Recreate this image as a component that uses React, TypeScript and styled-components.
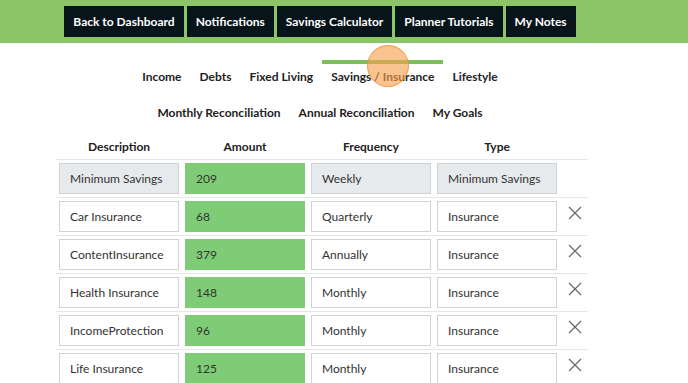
import React from "react";
import styled, { createGlobalStyle } from "styled-components";

const Global = createGlobalStyle`
  html, body { margin: 0; padding: 0; overflow: hidden; background: #fff; }
  body { font-family: Lato, "Noto Sans", sans-serif; color: #222; }
  * { box-sizing: border-box; }
`;

const Page = styled.div`
  width: 688px;
  height: 383px;
  position: relative;
  overflow: hidden;
`;

const TopBar = styled.div`
  height: 43px;
  background: #8cc567;
  padding-top: 6px;
`;

const Inner = styled.div`
  width: 640px;
  display: flex;
  justify-content: center;
`;

const TopButtons = styled.div`
  display: flex;
  gap: 3px;
`;

const TopButton = styled.button`
  height: 31px;
  padding: 0 8px;
  background: #07141a;
  color: #fff;
  border: 1px solid #07141a;
  font-family: Lato, "Noto Sans", sans-serif;
  font-weight: 700;
  font-size: 12px;
  cursor: pointer;
`;

const TabsWrap = styled.div`
  width: 640px;
  margin-top: 17px;
  display: flex;
  flex-direction: column;
  align-items: center;
  gap: 11px;
`;

const TabRow = styled.div`
  display: flex;
`;

const Tab = styled.div<{ $active?: boolean }>`
  border-top: 4px solid ${(p) => (p.$active ? "#7dbd5a" : "transparent")};
  padding: 5px 9px 0;
  line-height: 16px;
  font-weight: 700;
  font-size: 12px;
  color: #222;
  white-space: nowrap;
`;

const Touch = styled.div`
  position: absolute;
  left: 367px;
  top: 45px;
  width: 42px;
  height: 42px;
  border-radius: 50%;
  background: rgba(247, 160, 78, 0.62);
  border: 1.5px solid rgba(240, 140, 50, 0.75);
  pointer-events: none;
`;

const Table = styled.div`
  margin-left: 56px;
  width: 532px;
`;

const Row = styled.div<{ $header?: boolean }>`
  display: grid;
  grid-template-columns: 126px 126px 126px 126px 28px;
  border-bottom: 1px solid #e4e6e8;
  padding: ${(p) => (p.$header ? "18px 0 4px" : "3px 0")};
`;

const HeadCell = styled.div`
  text-align: center;
  line-height: 16px;
  font-weight: 700;
  font-size: 12px;
  color: #222;
`;

const Cell = styled.div`
  padding: 0 3px;
`;

const Field = styled.input<{ $tone: "plain" | "green" | "grey" }>`
  display: block;
  width: 120px;
  height: 31px;
  padding: 0 0 0 10px;
  font-family: Lato, "Noto Sans", sans-serif;
  font-size: 12px;
  color: #333;
  border: 1px solid
    ${(p) => (p.$tone === "green" ? "#7fcc77" : "#cfd3d6")};
  background: ${(p) =>
    p.$tone === "green" ? "#7fcc77" : p.$tone === "grey" ? "#e7eaed" : "#fff"};
  outline: none;
`;

const XCell = styled.div`
  display: flex;
  justify-content: center;
  padding-top: 5px;
  padding-left: 2px;
`;

const CloseIcon = () => (
  <svg width="14" height="14" viewBox="0 0 14 14">
    <path d="M1 1 L13 13 M13 1 L1 13" stroke="#6b6b6b" strokeWidth="1.3" fill="none" />
  </svg>
);

const rows = [
  { d: "Minimum Savings", a: "209", f: "Weekly", t: "Minimum Savings", locked: true },
  { d: "Car Insurance", a: "68", f: "Quarterly", t: "Insurance" },
  { d: "ContentInsurance", a: "379", f: "Annually", t: "Insurance" },
  { d: "Health Insurance", a: "148", f: "Monthly", t: "Insurance" },
  { d: "IncomeProtection", a: "96", f: "Monthly", t: "Insurance" },
  { d: "Life Insurance", a: "125", f: "Monthly", t: "Insurance" },
];

export default function App() {
  return (
    <Page>
      <Global />
      <TopBar>
        <Inner>
          <TopButtons>
            <TopButton>Back to Dashboard</TopButton>
            <TopButton>Notifications</TopButton>
            <TopButton>Savings Calculator</TopButton>
            <TopButton>Planner Tutorials</TopButton>
            <TopButton>My Notes</TopButton>
          </TopButtons>
        </Inner>
      </TopBar>
      <TabsWrap>
        <TabRow>
          <Tab>Income</Tab>
          <Tab>Debts</Tab>
          <Tab>Fixed Living</Tab>
          <Tab $active>Savings / Insurance</Tab>
          <Tab>Lifestyle</Tab>
        </TabRow>
        <TabRow>
          <Tab>Monthly Reconciliation</Tab>
          <Tab>Annual Reconciliation</Tab>
          <Tab>My Goals</Tab>
        </TabRow>
      </TabsWrap>
      <Table>
        <Row $header>
          <HeadCell>Description</HeadCell>
          <HeadCell>Amount</HeadCell>
          <HeadCell>Frequency</HeadCell>
          <HeadCell>Type</HeadCell>
          <div />
        </Row>
        {rows.map((r) => (
          <Row key={r.d}>
            <Cell>
              <Field readOnly value={r.d} $tone={r.locked ? "grey" : "plain"} />
            </Cell>
            <Cell>
              <Field readOnly value={r.a} $tone="green" />
            </Cell>
            <Cell>
              <Field readOnly value={r.f} $tone={r.locked ? "grey" : "plain"} />
            </Cell>
            <Cell>
              <Field readOnly value={r.t} $tone={r.locked ? "grey" : "plain"} />
            </Cell>
            <XCell>{r.locked ? null : <CloseIcon />}</XCell>
          </Row>
        ))}
      </Table>
      <Touch />
    </Page>
  );
}
